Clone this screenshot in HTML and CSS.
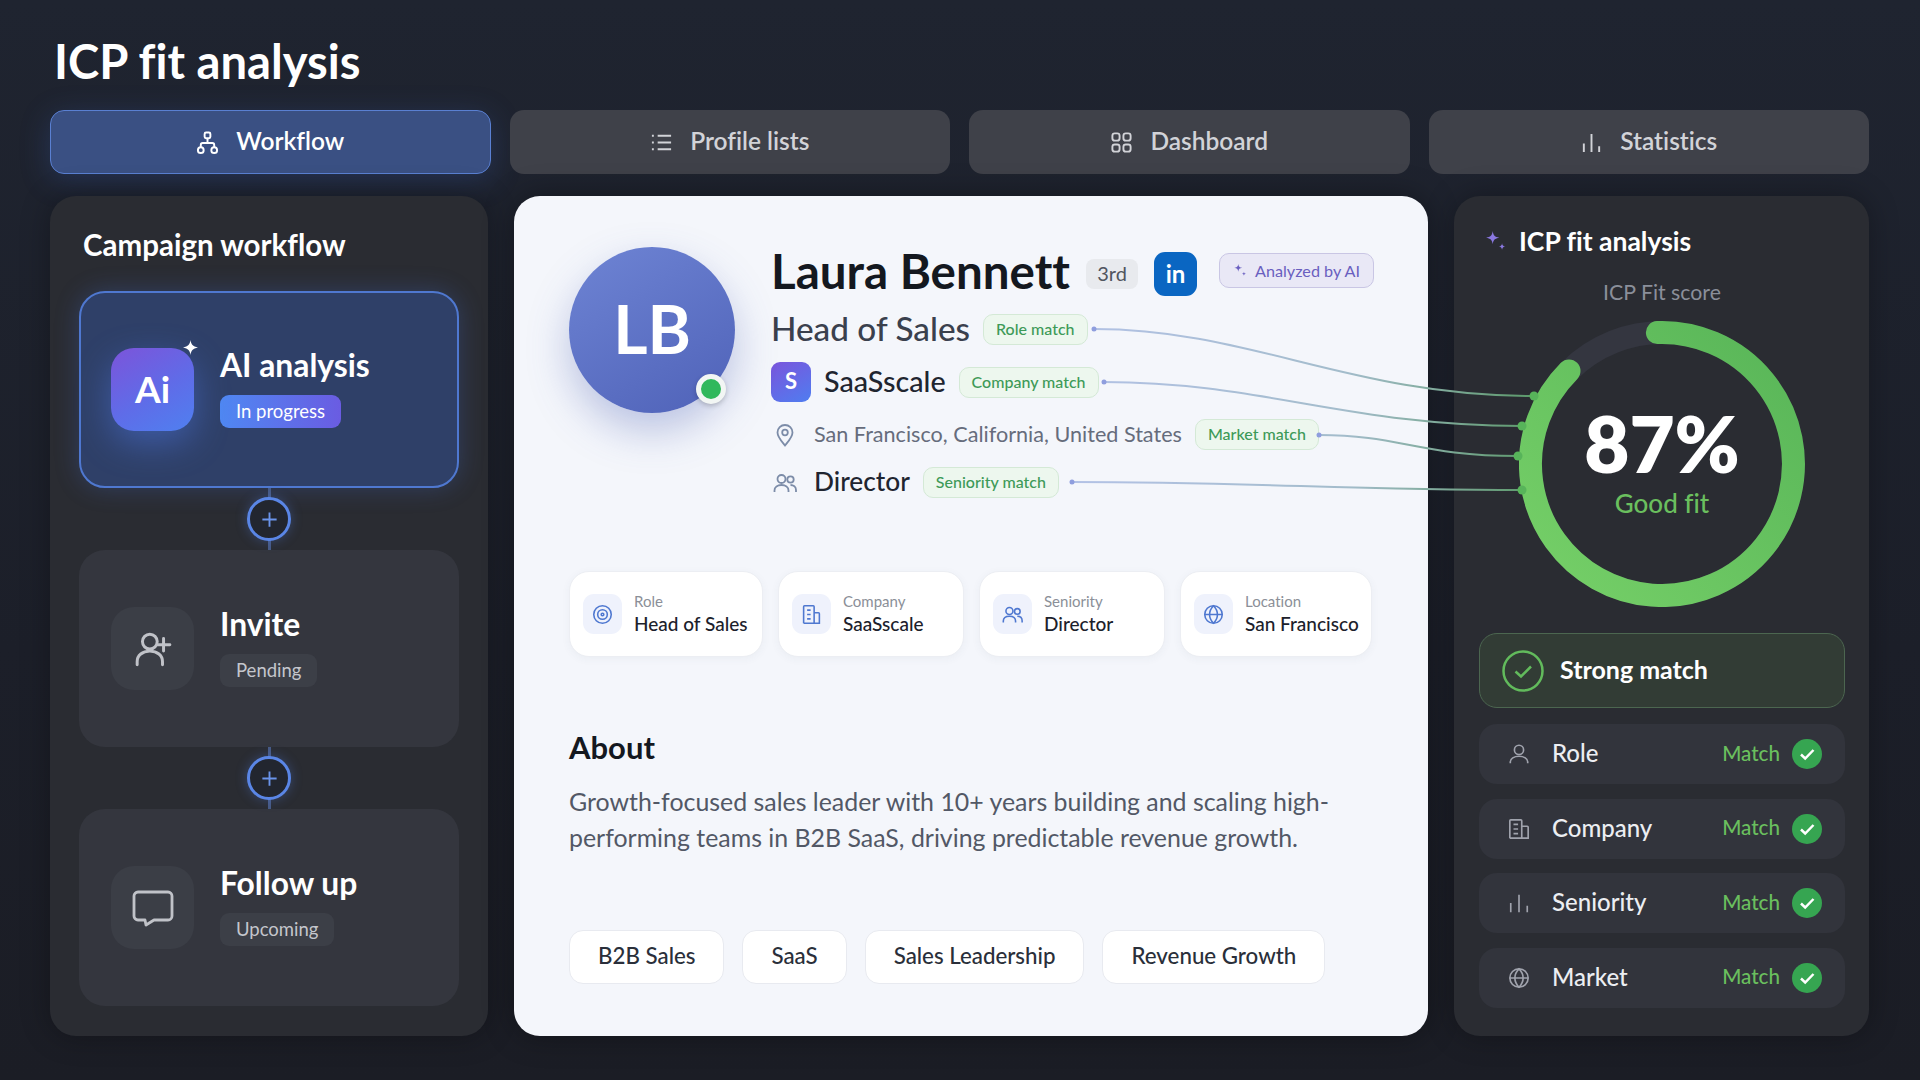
FILE: index.html
```html
<!DOCTYPE html>
<html lang="en">
<head>
    <meta charset="UTF-8">
    <title>ICP fit analysis</title>
    <link rel="stylesheet" href="styles.css">
</head>
<body>
<div class="page">
    <h1 class="page-title">ICP fit analysis</h1>

    <nav class="tabs">
        <div class="tab active">
            <svg class="tab-icon" viewBox="0 0 24 24"><rect x="9" y="1.5" width="6" height="6" rx="1.5"/><path d="M12 7.5v5M5 17v-2.5a2 2 0 0 1 2-2h10a2 2 0 0 1 2 2V17"/><circle cx="5" cy="20" r="3"/><circle cx="19" cy="20" r="3"/></svg>
            <span>Workflow</span>
        </div>
        <div class="tab">
            <svg class="tab-icon" viewBox="0 0 24 24"><path d="M8 5h14M8 12h14M8 19h14M2 5h2M2 12h2M2 19h2"/></svg>
            <span>Profile lists</span>
        </div>
        <div class="tab">
            <svg class="tab-icon" viewBox="0 0 24 24"><rect x="2.5" y="2.5" width="7.5" height="7.5" rx="2.5"/><rect x="14" y="2.5" width="7.5" height="7.5" rx="2.5"/><rect x="2.5" y="14" width="7.5" height="7.5" rx="2.5"/><rect x="14" y="14" width="7.5" height="7.5" rx="2.5"/></svg>
            <span>Dashboard</span>
        </div>
        <div class="tab">
            <svg class="tab-icon" viewBox="0 0 24 24"><path d="M4 22v-9M12 22V3M20 22v-6"/></svg>
            <span>Statistics</span>
        </div>
    </nav>

    <main class="columns">
        <!-- workflow -->
        <section class="panel workflow">
            <h2 class="panel-title">Campaign workflow</h2>

            <div class="step current">
                <div class="step-icon ai">Ai
                    <svg class="ai-star" viewBox="0 0 16 16"><path d="M8 0c.6 4.6 2.4 6.9 8 8-5.6 1.1-7.4 3.4-8 8-.6-4.6-2.400-6.900-8-8 5.600-1.100 7.400-3.400 8-8z"/></svg>
                </div>
                <div class="step-body">
                    <div class="step-name">AI analysis</div>
                    <span class="step-status">In progress</span>
                </div>
            </div>

            <div class="connector"><span class="add"><svg viewBox="0 0 20 20"><path d="M10 2.500v15M2.500 10h15"/></svg></span></div>

            <div class="step">
                <div class="step-icon">
                    <svg viewBox="0 0 36 36"><circle cx="15" cy="11" r="7"/><path d="M3 33v-3c0-6 5-10 12-10s12 4 12 10v3M28 8v12M22 14h12"/></svg>
                </div>
                <div class="step-body">
                    <div class="step-name">Invite</div>
                    <span class="step-status">Pending</span>
                </div>
            </div>

            <div class="connector"><span class="add"><svg viewBox="0 0 20 20"><path d="M10 2.500v15M2.500 10h15"/></svg></span></div>

            <div class="step">
                <div class="step-icon">
                    <svg viewBox="0 0 42 36"><path d="M6 2h30a4 4 0 0 1 4 4v20a4 4 0 0 1-4 4H22l-8 5 -1-5H6a4 4 0 0 1-4-4V6a4 4 0 0 1 4-4z"/></svg>
                </div>
                <div class="step-body">
                    <div class="step-name">Follow up</div>
                    <span class="step-status">Upcoming</span>
                </div>
            </div>
        </section>

        <!-- profile -->
        <section class="profile">
            <div class="hero">
                <div class="avatar">LB<span class="online"></span></div>
                <div class="facts">
                    <div class="fact name-row">
                        <span class="name">Laura Bennett</span>
                        <span class="degree">3rd</span>
                        <span class="linkedin">in</span>
                        <span class="analyzed">
                            <svg viewBox="0 0 16 16"><path d="M6 1c.4 3 1.500 4.100 4.500 4.500C7.500 5.900 6.400 7 6 10c-.4-3-1.500-4.100-4.500-4.500C4.500 5.100 5.600 4 6 1zM12.500 10c.2 1.500.8 2.100 2.300 2.300-1.500.2-2.100.8-2.300 2.300-.2-1.500-.8-2.100-2.300-2.300 1.500-.2 2.100-.8 2.300-2.300z"/></svg>
                            Analyzed by AI
                        </span>
                    </div>
                    <div class="fact">
                        <span class="job">Head of Sales</span>
                        <span class="pill">Role match</span>
                    </div>
                    <div class="fact company-row">
                        <span class="logo">S</span>
                        <span class="company">SaaSscale</span>
                        <span class="pill">Company match</span>
                    </div>
                    <div class="fact">
                        <svg class="fact-icon" viewBox="0 0 24 24"><path d="M12 22.500c-4-5-7.500-8.500-7.500-13a7.500 7.500 0 0 1 15 0c0 4.500-3.500 8-7.500 13z"/><circle cx="12" cy="9.500" r="2.800"/></svg>
                        <span class="place">San Francisco, California, United States</span>
                        <span class="pill">Market match</span>
                    </div>
                    <div class="fact">
                        <svg class="fact-icon" viewBox="0 0 24 24"><circle cx="8.500" cy="8" r="4"/><circle cx="17.500" cy="8.500" r="3.200"/><path d="M1.500 21v-1.500c0-3.500 3-5.500 7-5.500s7 2 7 5.500V21M17.500 14c3 0 5.500 1.800 5.500 5v2"/></svg>
                        <span class="level">Director</span>
                        <span class="pill">Seniority match</span>
                    </div>
                </div>
            </div>

            <div class="info-cards">
                <div class="info-card">
                    <span class="info-icon"><svg viewBox="0 0 24 24"><circle cx="12" cy="12" r="10"/><circle cx="12" cy="12" r="5.500"/><circle cx="12" cy="12" r="1.500"/></svg></span>
                    <div class="info-text"><div class="info-label">Role</div><div class="info-value">Head of Sales</div></div>
                </div>
                <div class="info-card">
                    <span class="info-icon"><svg viewBox="0 0 24 24"><path d="M3 22V3a1 1 0 0 1 1-1h10a1 1 0 0 1 1 1v19M15 10h5a1 1 0 0 1 1 1v11H3M7 7h4M7 12h4M7 17h4"/></svg></span>
                    <div class="info-text"><div class="info-label">Company</div><div class="info-value">SaaSscale</div></div>
                </div>
                <div class="info-card">
                    <span class="info-icon"><svg viewBox="0 0 24 24"><circle cx="8.500" cy="8" r="4"/><circle cx="17.500" cy="8.500" r="3.200"/><path d="M1.500 21v-1.500c0-3.500 3-5.500 7-5.500s7 2 7 5.500V21M17.500 14c3 0 5.500 1.800 5.500 5v2"/></svg></span>
                    <div class="info-text"><div class="info-label">Seniority</div><div class="info-value">Director</div></div>
                </div>
                <div class="info-card">
                    <span class="info-icon"><svg viewBox="0 0 24 24"><circle cx="12" cy="12" r="10"/><path d="M2 12h20M12 2c3 3 4.500 6.500 4.500 10S15 19 12 22c-3-3-4.500-6.500-4.500-10S9 5 12 2z"/></svg></span>
                    <div class="info-text"><div class="info-label">Location</div><div class="info-value">San Francisco</div></div>
                </div>
            </div>

            <h2 class="about-title">About</h2>
            <p class="about">Growth-focused sales leader with 10+ years building and scaling high-performing teams in B2B SaaS, driving predictable revenue growth.</p>

            <div class="tags">
                <span class="tag">B2B Sales</span>
                <span class="tag">SaaS</span>
                <span class="tag">Sales Leadership</span>
                <span class="tag">Revenue Growth</span>
            </div>
        </section>

        <!-- score -->
        <section class="panel score">
            <div class="score-head">
                <svg viewBox="0 0 20 20"><path d="M7 1c.5 4 2 5.500 6 6-4 .5-5.500 2-6 6-.5-4-2-5.500-6-6 4-.5 5.500-2 6-6zM15.500 12c.3 2 1 2.700 3 3-2 .3-2.700 1-3 3-.3-2-1-2.700-3-3 2-.3 2.700-1 3-3z"/></svg>
                <span>ICP fit analysis</span>
            </div>
            <div class="score-label">ICP Fit score</div>
            <div class="gauge">
                <svg viewBox="0 0 286 286">
                    <defs>
                        <linearGradient id="ringGrad" x1="1" y1="0" x2="0" y2="1">
                            <stop offset="0" stop-color="#58b558"/>
                            <stop offset="1" stop-color="#76d068"/>
                        </linearGradient>
                    </defs>
                    <circle class="ring-track" cx="143" cy="143" r="131.500"/>
                    <path class="ring-value" d="M138.400 11.600 A131.500 131.500 0 1 1 50 50"/>
                </svg>
                <div class="gauge-text">
                    <div class="percent">87%</div>
                    <div class="fit">Good fit</div>
                </div>
            </div>

            <div class="strong">
                <span class="strong-icon"><svg viewBox="0 0 42 42"><circle cx="21" cy="21" r="19.500"/><path d="M13.500 21.500l5.500 5 10-10"/></svg></span>
                <span class="strong-text">Strong match</span>
            </div>

            <div class="checks">
                <div class="check-row">
                    <svg class="row-icon" viewBox="0 0 24 24"><circle cx="12" cy="7.500" r="5"/><path d="M2.500 22v-1.500c0-3.500 4-6 9.500-6s9.500 2.500 9.500 6V22"/></svg>
                    <span class="row-name">Role</span>
                    <span class="row-match">Match</span>
                    <span class="tick"><svg viewBox="0 0 30 30"><path d="M9 15.500l4.200 4L21.500 11"/></svg></span>
                </div>
                <div class="check-row">
                    <svg class="row-icon" viewBox="0 0 24 24"><path d="M2 22V3a1 1 0 0 1 1-1h11a1 1 0 0 1 1 1v19M15 9h6a1 1 0 0 1 1 1v12H2M6 7h5M6 12h5M6 17h5"/></svg>
                    <span class="row-name">Company</span>
                    <span class="row-match">Match</span>
                    <span class="tick"><svg viewBox="0 0 30 30"><path d="M9 15.500l4.200 4L21.500 11"/></svg></span>
                </div>
                <div class="check-row">
                    <svg class="row-icon" viewBox="0 0 24 24"><path d="M3 22v-10M12 22V3M21 22v-7"/></svg>
                    <span class="row-name">Seniority</span>
                    <span class="row-match">Match</span>
                    <span class="tick"><svg viewBox="0 0 30 30"><path d="M9 15.500l4.200 4L21.500 11"/></svg></span>
                </div>
                <div class="check-row">
                    <svg class="row-icon" viewBox="0 0 24 24"><circle cx="12" cy="12" r="10"/><path d="M2 12h20M12 2c3 3 4.500 6.500 4.500 10S15 19 12 22c-3-3-4.500-6.500-4.500-10S9 5 12 2z"/></svg>
                    <span class="row-name">Market</span>
                    <span class="row-match">Match</span>
                    <span class="tick"><svg viewBox="0 0 30 30"><path d="M9 15.500l4.200 4L21.500 11"/></svg></span>
                </div>
            </div>
        </section>
    </main>

    <!-- lines from the match pills to the ring -->
    <svg class="links" viewBox="0 0 1920 1080">
        <defs>
            <linearGradient id="linkGrad" gradientUnits="userSpaceOnUse" x1="1070" y1="0" x2="1530" y2="0">
                <stop offset="0" stop-color="#b3c2e6"/>
                <stop offset="0.6" stop-color="#a3bccb"/>
                <stop offset="1" stop-color="#5d9a6c"/>
            </linearGradient>
        </defs>
        <path class="link" d="M1094 329C1250 329 1350 396 1534 396"/>
        <path class="link" d="M1104 382C1260 382 1350 426 1522 426"/>
        <path class="link" d="M1319 435C1400 435 1420 456 1518 456"/>
        <path class="link" d="M1072 482C1250 482 1350 490 1522 490"/>
        <circle class="link-start" cx="1094" cy="329" r="2.500"/>
        <circle class="link-start" cx="1104" cy="382" r="2.500"/>
        <circle class="link-start" cx="1319" cy="435" r="2.500"/>
        <circle class="link-start" cx="1072" cy="482" r="2.500"/>
        <circle class="link-end" cx="1534" cy="396" r="4.500"/>
        <circle class="link-end" cx="1522" cy="426" r="4.500"/>
        <circle class="link-end" cx="1518" cy="456" r="4.500"/>
        <circle class="link-end" cx="1522" cy="490" r="4.500"/>
    </svg>
</div>
</body>
</html>
```

FILE: styles.css
```css
* {
    box-sizing: border-box;
}
body {
    margin: 0;
    background: #1d2029;
    font-family: Lato, "Open Sans", sans-serif;
    font-variant-ligatures: none;
    color: white;
}
h1, h2, p {
    margin: 0;
}
svg {
    display: block;
}
.page {
    position: relative;
    width: 1920px;
    height: 1080px;
    padding: 0 51px 0 50px;
    overflow: hidden;
    background: linear-gradient(180deg, #1f2430 0%, #1c1f29 60%, #1b1d25 100%);
}
.page-title {
    height: 110px;
    padding: 31px 0 0 4px;
    font-size: 47.200px;
    line-height: 60px;
    font-weight: 700;
}

/* tabs */
.tabs {
    display: grid;
    grid-template-columns: repeat(4, 1fr);
    gap: 19px;
    height: 64px;
}
.tab {
    display: flex;
    align-items: center;
    justify-content: center;
    gap: 17px;
    background-color: #3f4149;
    border-radius: 14px;
    color: #d2d3d8;
    font-size: 24.500px;
    font-weight: 600;
}
.tab span {
    margin-top: -3px;
}
.tab.active {
    background-color: #3a5083;
    border: 1px solid #5a80d2;
    color: white;
    box-shadow: 0 6px 30px rgba(60, 100, 190, .28);
}
.tab-icon {
    width: 23px;
    height: 23px;
    fill: none;
    stroke: currentColor;
    stroke-width: 2;
}

.columns {
    display: grid;
    grid-template-columns: 438px 914px 415px;
    gap: 26px;
    height: 840px;
    margin-top: 22px;
}
.panel {
    background-color: #2a2c32;
    border-radius: 26px;
    box-shadow: 0 0 30px rgba(0, 0, 0, .3);
}

/* workflow */
.workflow {
    padding: 31px 29px 0;
}
.panel-title {
    height: 36px;
    margin-bottom: 28px;
    padding-left: 4px;
    font-size: 29.500px;
    line-height: 36px;
    font-weight: 700;
}
.step {
    display: flex;
    align-items: center;
    gap: 26px;
    height: 197px;
    padding-left: 32px;
    background-color: #34363e;
    border-radius: 26px;
}
.step.current {
    padding-left: 30px;
    background: #2f4068;
    border: 2px solid #4f78d0;
    box-shadow: 0 0 24px rgba(70, 110, 210, .3);
}
.step-icon {
    position: relative;
    display: flex;
    align-items: center;
    justify-content: center;
    flex: none;
    width: 83px;
    height: 83px;
    background-color: #3b3e46;
    border-radius: 23px;
}
.step-icon svg {
    width: 42px;
    height: 38px;
    fill: none;
    stroke: #c0c2c8;
    stroke-width: 2.800;
    stroke-linecap: round;
    stroke-linejoin: round;
}
.step-icon.ai {
    padding-bottom: 3px;
    background: linear-gradient(150deg, #7c54da 0%, #5f6ce8 55%, #4f80f0 100%);
    box-shadow: 0 12px 34px rgba(80, 125, 240, .45);
    font-size: 37px;
    font-weight: 700;
}
.step-icon .ai-star {
    position: absolute;
    top: -8px;
    right: -4px;
    width: 15px;
    height: 15px;
    fill: white;
    stroke: none;
}
.step-body {
    margin-top: -5px;
}
.step-name {
    margin-bottom: 11px;
    font-size: 31.800px;
    line-height: 38px;
    font-weight: 700;
}
.step-status {
    display: inline-block;
    height: 33px;
    padding: 0 16px;
    background-color: #3c3f47;
    border-radius: 9px;
    color: #c4c6cc;
    font-size: 18.500px;
    line-height: 32px;
}
.current .step-status {
    background: linear-gradient(90deg, #4f88f2, #6a5ce2);
    color: white;
}
.connector {
    position: relative;
    display: flex;
    align-items: center;
    justify-content: center;
    height: 62px;
}
.connector::before {
    content: "";
    position: absolute;
    top: 0;
    bottom: 0;
    left: 50%;
    width: 3px;
    margin-left: -1.500px;
    background-color: #475a85;
}
.add {
    position: relative;
    display: flex;
    align-items: center;
    justify-content: center;
    width: 44px;
    height: 44px;
    background-color: #22262f;
    border: 3px solid #5a86e6;
    border-radius: 50%;
    box-shadow: 0 0 12px rgba(80, 125, 230, .35);
}
.add svg {
    width: 19px;
    height: 19px;
    fill: none;
    stroke: #6a94ea;
    stroke-width: 2;
}

/* profile */
.profile {
    padding: 51px 56px 0 55px;
    background-color: #f4f6fb;
    border-radius: 26px;
    color: #14181f;
    box-shadow: 0 0 30px rgba(0, 0, 0, .35);
}
.hero {
    display: flex;
    gap: 36px;
    height: 250px;
}
.avatar {
    position: relative;
    display: flex;
    align-items: center;
    justify-content: center;
    flex: none;
    width: 166px;
    height: 166px;
    padding-bottom: 4px;
    background: linear-gradient(150deg, #6e84d4, #4f62b8);
    border-radius: 50%;
    box-shadow: 0 18px 40px rgba(80, 100, 180, .35);
    color: white;
    font-size: 66px;
    font-weight: 700;
}
.online {
    position: absolute;
    top: 127px;
    left: 127px;
    width: 30px;
    height: 30px;
    background-color: #30b85c;
    border: 5px solid #f2f6f4;
    border-radius: 50%;
    box-shadow: 0 2px 5px rgba(0, 0, 0, .2);
}
.facts {
    display: flex;
    flex-direction: column;
    margin-top: 5px;
}
.fact {
    display: flex;
    align-items: center;
    gap: 13px;
    height: 31px;
    margin-bottom: 17px;
    white-space: nowrap;
}
.name-row {
    gap: 16px;
    height: 44px;
    margin-bottom: 18px;
}
.company-row {
    height: 40px;
}
.name {
    margin-top: -7px;
    font-size: 47.500px;
    font-weight: 700;
}
.degree {
    flex: none;
    width: 52px;
    height: 30px;
    background-color: #e8eaee;
    border-radius: 8px;
    color: #50555f;
    font-size: 20px;
    line-height: 29px;
    text-align: center;
}
.linkedin {
    flex: none;
    width: 43px;
    height: 44px;
    background-color: #0a66c2;
    border-radius: 11px;
    color: white;
    font-size: 24px;
    font-weight: 700;
    line-height: 44px;
    text-align: center;
}
.analyzed {
    display: flex;
    flex: none;
    align-items: center;
    justify-content: center;
    gap: 8px;
    width: 155px;
    height: 35px;
    margin: -8px 0 0 6px;
    background-color: #e9e8f6;
    border: 1px solid #c9c6e4;
    border-radius: 10px;
    color: #6a5fc0;
    font-size: 16.200px;
}
.analyzed svg {
    width: 14px;
    height: 14px;
    fill: #6a5fc0;
}
.job {
    margin-top: -3px;
    color: #3a404d;
    font-size: 33.300px;
    font-weight: 500;
}
.pill {
    height: 31px;
    padding: 0 12px;
    background-color: #edf7ee;
    border: 1px solid #d4e9d6;
    border-radius: 10px;
    color: #3d9a58;
    font-size: 16px;
    font-weight: 500;
    line-height: 28px;
}
.logo {
    width: 40px;
    height: 40px;
    background: linear-gradient(150deg, #7a55dc, #4f7df0);
    border-radius: 9px;
    color: white;
    font-size: 22px;
    font-weight: 700;
    line-height: 38px;
    text-align: center;
}
.company {
    margin-top: -3px;
    color: #1f2530;
    font-size: 28.700px;
    font-weight: 500;
}
.fact-icon {
    flex: none;
    width: 24px;
    height: 24px;
    margin: 0 4px 0 2px;
    fill: none;
    stroke: #7c8ca8;
    stroke-width: 1.800;
}
.place {
    margin-top: -2px;
    color: #666c7c;
    font-size: 21.600px;
}
.level {
    margin-top: -3px;
    color: #1f2530;
    font-size: 26.300px;
    font-weight: 500;
}
.info-cards {
    display: grid;
    grid-template-columns: 194px 186px 186px 192px;
    gap: 15px;
    margin-top: 74px;
}
.info-card {
    display: flex;
    align-items: center;
    gap: 12px;
    height: 86px;
    padding-left: 13px;
    background-color: white;
    border: 1px solid #eceef3;
    border-radius: 20px;
    box-shadow: 0 2px 8px rgba(60, 70, 100, .05);
}
.info-icon {
    display: flex;
    align-items: center;
    justify-content: center;
    flex: none;
    width: 39px;
    height: 40px;
    background-color: #eff2fc;
    border-radius: 11px;
}
.info-icon svg {
    width: 21px;
    height: 21px;
    fill: none;
    stroke: #4f78d0;
    stroke-width: 1.800;
}
.info-text {
    margin-top: -2px;
}
.info-label {
    color: #8b8f98;
    font-size: 15px;
    line-height: 20px;
}
.info-value {
    margin-top: 1px;
    color: #1c212b;
    font-size: 19px;
    font-weight: 500;
    line-height: 24px;
}
.about-title {
    height: 36px;
    margin-top: 72px;
    font-size: 31px;
    line-height: 36px;
    font-weight: 700;
}
.about {
    margin-top: 18px;
    color: #525866;
    font-size: 24.900px;
    line-height: 36px;
}
.tags {
    display: flex;
    gap: 18px;
    margin-top: 75px;
}
.tag {
    height: 54px;
    padding: 0 28px;
    background-color: white;
    border: 1px solid #e8eaf0;
    border-radius: 14px;
    color: #2a2f3a;
    font-size: 22.300px;
    font-weight: 500;
    line-height: 50px;
}

/* score */
.score {
    padding: 29px 24px 0 25px;
}
.score-head {
    display: flex;
    align-items: center;
    gap: 12px;
    height: 32px;
    padding-left: 6px;
    font-size: 26.500px;
    font-weight: 700;
}
.score-head svg {
    width: 22px;
    height: 22px;
    fill: #8a78e0;
}
.score-label {
    height: 24px;
    margin-top: 23px;
    color: #8a8f9a;
    font-size: 21.300px;
    line-height: 24px;
    text-align: center;
}
.gauge {
    position: relative;
    width: 286px;
    height: 286px;
    margin: 17px auto 0;
}
.gauge svg {
    width: 286px;
    height: 286px;
    fill: none;
    stroke-width: 23;
}
.ring-track {
    stroke: #343640;
}
.ring-value {
    stroke: url(#ringGrad);
    stroke-linecap: round;
}
.gauge-text {
    position: absolute;
    top: 77px;
    left: 0;
    width: 286px;
    text-align: center;
}
.percent {
    font-size: 78px;
    line-height: 90px;
    font-weight: 800;
}
.fit {
    margin-top: -1px;
    color: #6abf5e;
    font-size: 26px;
    font-weight: 500;
    line-height: 32px;
}
.strong {
    display: flex;
    align-items: center;
    gap: 16px;
    height: 75px;
    margin-top: 26px;
    padding-left: 22px;
    background-color: #323c35;
    border: 1px solid #4c6650;
    border-radius: 18px;
    font-size: 25px;
    font-weight: 700;
}
.strong-text {
    margin-top: -4px;
}
.strong-icon svg {
    width: 42px;
    height: 42px;
    fill: none;
    stroke: #62bb5c;
    stroke-width: 2.500;
}
.checks {
    display: flex;
    flex-direction: column;
    gap: 14.500px;
    margin-top: 16px;
}
.check-row {
    display: flex;
    align-items: center;
    height: 60px;
    padding: 0 23px 0 29px;
    background-color: #32343c;
    border-radius: 18px;
}
.row-icon {
    width: 22px;
    height: 22px;
    fill: none;
    stroke: #a0a3ad;
    stroke-width: 1.800;
}
.row-name {
    flex: 1;
    margin: -3px 0 0 22px;
    color: #eceef2;
    font-size: 24px;
    font-weight: 500;
}
.row-match {
    margin-top: -3px;
    color: #6abf5e;
    font-size: 20.600px;
    font-weight: 500;
}
.tick {
    width: 30px;
    height: 30px;
    margin-left: 12px;
    background-color: #36a551;
    border-radius: 50%;
}
.tick svg {
    width: 30px;
    height: 30px;
    fill: none;
    stroke: white;
    stroke-width: 2.500;
}

/* connection lines, they run over the cards */
.links {
    position: absolute;
    top: 0;
    left: 0;
    width: 1920px;
    height: 1080px;
    pointer-events: none;
}
.link {
    fill: none;
    stroke: url(#linkGrad);
    stroke-width: 2;
}
.link-start {
    fill: #8f9ede;
}
.link-end {
    fill: #57b45a;
}
```
